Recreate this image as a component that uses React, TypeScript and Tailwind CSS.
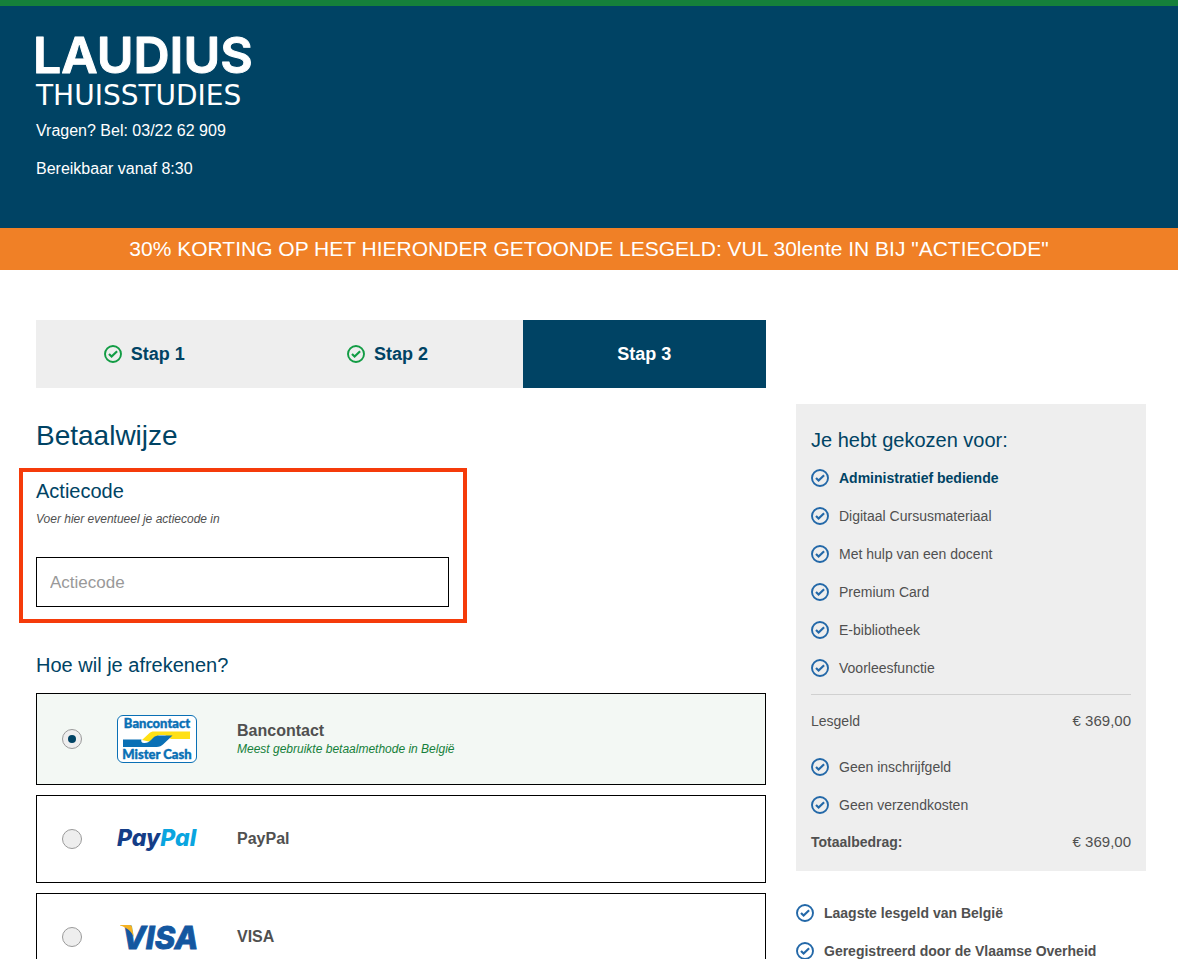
import { useState, type ReactNode } from "react";
import { clsx } from "clsx";

interface PaymentMethod {
  id: string;
  name: string;
  note?: string;
  logo: ReactNode;
}

const courseItems = [
  "Digitaal Cursusmateriaal",
  "Met hulp van een docent",
  "Premium Card",
  "E-bibliotheek",
  "Voorleesfunctie",
];

const freeItems = ["Geen inschrijfgeld", "Geen verzendkosten"];

const benefits = ["Laagste lesgeld van België", "Geregistreerd door de Vlaamse Overheid"];

function CheckCircle({ className }: { className?: string }) {
  return (
    <svg
      viewBox="0 0 18 18"
      className={clsx("size-[18px] shrink-0", className)}
      fill="none"
      stroke="currentColor"
      aria-hidden="true"
    >
      <circle cx="9" cy="9" r="8" strokeWidth="1.9" />
      <path d="M5 9l2.600 2.500 5.500-5.200" strokeWidth="2.200" />
    </svg>
  );
}

function LaudiusLogo() {
  return (
    <svg
      viewBox="0 0 222 76"
      className="h-[76px] w-[222px] overflow-visible"
      fill="#fff"
      role="img"
      aria-label="Laudius Thuisstudies"
    >
      <text
        x="-3"
        y="41"
        fontFamily="Inter, sans-serif"
        fontSize="50"
        fontWeight="600"
        stroke="#fff"
        strokeWidth="1"
        strokeLinejoin="round"
      >
        LAUDIUS
      </text>
      <text x="0" y="73" fontFamily="'DejaVu Sans', sans-serif" fontSize="28">
        THUISSTUDIES
      </text>
    </svg>
  );
}

function BancontactLogo() {
  return (
    <svg viewBox="0 0 80 48" className="h-12 w-20 overflow-visible" aria-hidden="true">
      <rect x="0.5" y="0.5" width="79" height="47" rx="5.5" fill="#fff" stroke="#0a70b5" />
      <g
        fill="#0a70b5"
        stroke="#0a70b5"
        strokeWidth="0.4"
        fontFamily="Lato, 'Open Sans', sans-serif"
        fontSize="13"
        fontWeight="900"
        textAnchor="middle"
      >
        <text x="40" y="13">Bancontact</text>
        <text x="40" y="44">Mister Cash</text>
      </g>
      <path d="M25 25l7-6.500c1.500-1.500 3-2 5-2h36v7.500H54l-6-4h-6l-8 7z" fill="#ffe015" />
      <path d="M6 24.500h18.500c-.8 2 .2 3.300 2.500 3.500 3 .2 5-1 7-3l2.500-2.500c1.500-1.500 3.500-2 6-2h13l-9 8.500c-2 2-4 3-7 3H6z" fill="#0a70b5" />
    </svg>
  );
}

function PayPalLogo() {
  return (
    <svg viewBox="0 0 80 24" className="h-6 w-20 overflow-visible" aria-hidden="true">
      <text
        x="0"
        y="19"
        fontFamily="Inter, sans-serif"
        fontSize="23"
        fontWeight="800"
        fontStyle="italic"
        fill="#143d87"
      >
        Pay<tspan fill="#0aa5df">Pal</tspan>
      </text>
    </svg>
  );
}

function VisaLogo() {
  return (
    <svg viewBox="0 0 80 28" className="h-7 w-20 overflow-visible" aria-hidden="true">
      <text
        x="5"
        y="26"
        fontFamily="Inter, sans-serif"
        fontSize="31"
        fontWeight="800"
        fontStyle="italic"
        fill="#1457a0"
        stroke="#1457a0"
        strokeWidth="0.8"
      >
        VISA
      </text>
      <path d="M3 2h9.500c1.500 0 2.300.8 2.600 2.200L17 14.500C15 9 10 4.500 3 2.600z" fill="#f4b223" />
    </svg>
  );
}

const paymentMethods: PaymentMethod[] = [
  {
    id: "bancontact",
    name: "Bancontact",
    note: "Meest gebruikte betaalmethode in België",
    logo: <BancontactLogo />,
  },
  { id: "paypal", name: "PayPal", logo: <PayPalLogo /> },
  { id: "visa", name: "VISA", logo: <VisaLogo /> },
];

function Steps() {
  return (
    <ol className="grid h-[68px] grid-cols-3 bg-[#eeeeee] text-lg font-bold text-[#004364]">
      {["Stap 1", "Stap 2"].map((step) => (
        <li key={step} className="flex items-center justify-center gap-[9px] pr-[27px]">
          <CheckCircle className="text-[#129c44]" />
          {step}
        </li>
      ))}
      <li aria-current="step" className="flex items-center justify-center bg-[#004364] text-white">
        Stap 3
      </li>
    </ol>
  );
}

function CheckRow({ children, className }: { children: ReactNode; className?: string }) {
  return (
    <li className={clsx("flex h-[38px] items-center gap-2.5", className)}>
      <CheckCircle className="text-[#2368a8]" />
      <span>{children}</span>
    </li>
  );
}

function OrderSummary() {
  return (
    <section className="bg-[#eeeeee] px-[15px] pt-5 pb-[11px] text-sm text-[#505050]">
      <h2 className="text-xl leading-8 text-[#004364]">Je hebt gekozen voor:</h2>
      <ul className="mt-[3px]">
        <CheckRow className="font-bold text-[#004364]">Administratief bediende</CheckRow>
        {courseItems.map((item) => (
          <CheckRow key={item}>{item}</CheckRow>
        ))}
      </ul>
      <hr className="mt-[7px] border-[#d0d0d0]" />
      <dl className="mt-[7px] flex h-[38px] items-center justify-between">
        <dt>Lesgeld</dt>
        <dd className="text-[15px]">€ 369,00</dd>
      </dl>
      <ul className="mt-2">
        {freeItems.map((item) => (
          <CheckRow key={item}>{item}</CheckRow>
        ))}
      </ul>
      <dl className="flex h-9 items-center justify-between">
        <dt className="font-bold">Totaalbedrag:</dt>
        <dd className="text-[15px]">€ 369,00</dd>
      </dl>
    </section>
  );
}

export default function App() {
  const [code, setCode] = useState("");
  const [method, setMethod] = useState("bancontact");

  return (
    <div className="bg-white font-['Liberation_Sans',Arial,sans-serif] text-[#505050]">
      <header className="border-t-[6px] border-[#15803a] bg-[#004364] px-9 pt-[26px] pb-10 text-base text-white">
        <LaudiusLogo />
        <p className="mt-[11px] leading-6">Vragen? Bel: 03/22 62 909</p>
        <p className="mt-3.5 pb-[7px] leading-6">Bereikbaar vanaf 8:30</p>
      </header>
      <p className="bg-[#f08026] py-[5px] text-center text-[21px] leading-8 text-white">
        30% KORTING OP HET HIERONDER GETOONDE LESGELD: VUL 30lente IN BIJ "ACTIECODE"
      </p>

      <main className="flex items-start gap-[30px] pt-[50px] pr-8 pl-9">
        <div className="min-w-0 flex-1">
          <Steps />
          <h1 className="mt-7 text-[28px] leading-10 text-[#004364]">Betaalwijze</h1>

          {/* Highlighted promo code field */}
          <section className="mt-3 -ml-[17px] w-[448px] max-w-full border-4 border-[#f53b0a] pt-[7px] pr-3.5 pb-3 pl-[13px]">
            <label htmlFor="actiecode" className="block text-xl leading-6 text-[#004364]">
              Actiecode
            </label>
            <p id="actiecode-hint" className="mt-2 text-xs leading-4 italic">
              Voer hier eventueel je actiecode in
            </p>
            <input
              id="actiecode"
              type="text"
              placeholder="Actiecode"
              aria-describedby="actiecode-hint"
              value={code}
              onChange={(e) => setCode(e.target.value)}
              className="mt-[30px] block h-[50px] w-full border border-black px-[13px] pt-0.5 text-[17px] placeholder:text-[#999999]"
            />
          </section>

          <fieldset className="mt-7">
            <legend className="text-xl leading-7 text-[#004364]">Hoe wil je afrekenen?</legend>
            <div className="mt-3.5 flex flex-col gap-2.5">
              {paymentMethods.map(({ id, name, note, logo }) => (
                <label
                  key={id}
                  className={clsx(
                    "flex items-center border border-black pl-[25px]",
                    method === id ? "h-[92px] bg-[#f3f8f4]" : "h-[88px]"
                  )}
                >
                  <input
                    type="radio"
                    name="payment"
                    value={id}
                    checked={method === id}
                    onChange={() => setMethod(id)}
                    className="grid size-5 shrink-0 appearance-none place-items-center rounded-full border border-[#9a9a9a] bg-[#eeeeee] before:size-2 before:rounded-full checked:before:bg-[#004364]"
                  />
                  <span className="ml-[35px] shrink-0">{logo}</span>
                  <span className="ml-10">
                    <span className="block leading-5 font-bold">{name}</span>
                    {note && <span className="block text-xs leading-4 text-[#15803a] italic">{note}</span>}
                  </span>
                </label>
              ))}
            </div>
          </fieldset>
        </div>

        <aside className="mt-[84px] w-[350px] shrink-0">
          <OrderSummary />
          <ul className="mt-[23px] text-sm">
            {benefits.map((item) => (
              <CheckRow key={item} className="font-bold">
                {item}
              </CheckRow>
            ))}
          </ul>
        </aside>
      </main>
    </div>
  );
}
